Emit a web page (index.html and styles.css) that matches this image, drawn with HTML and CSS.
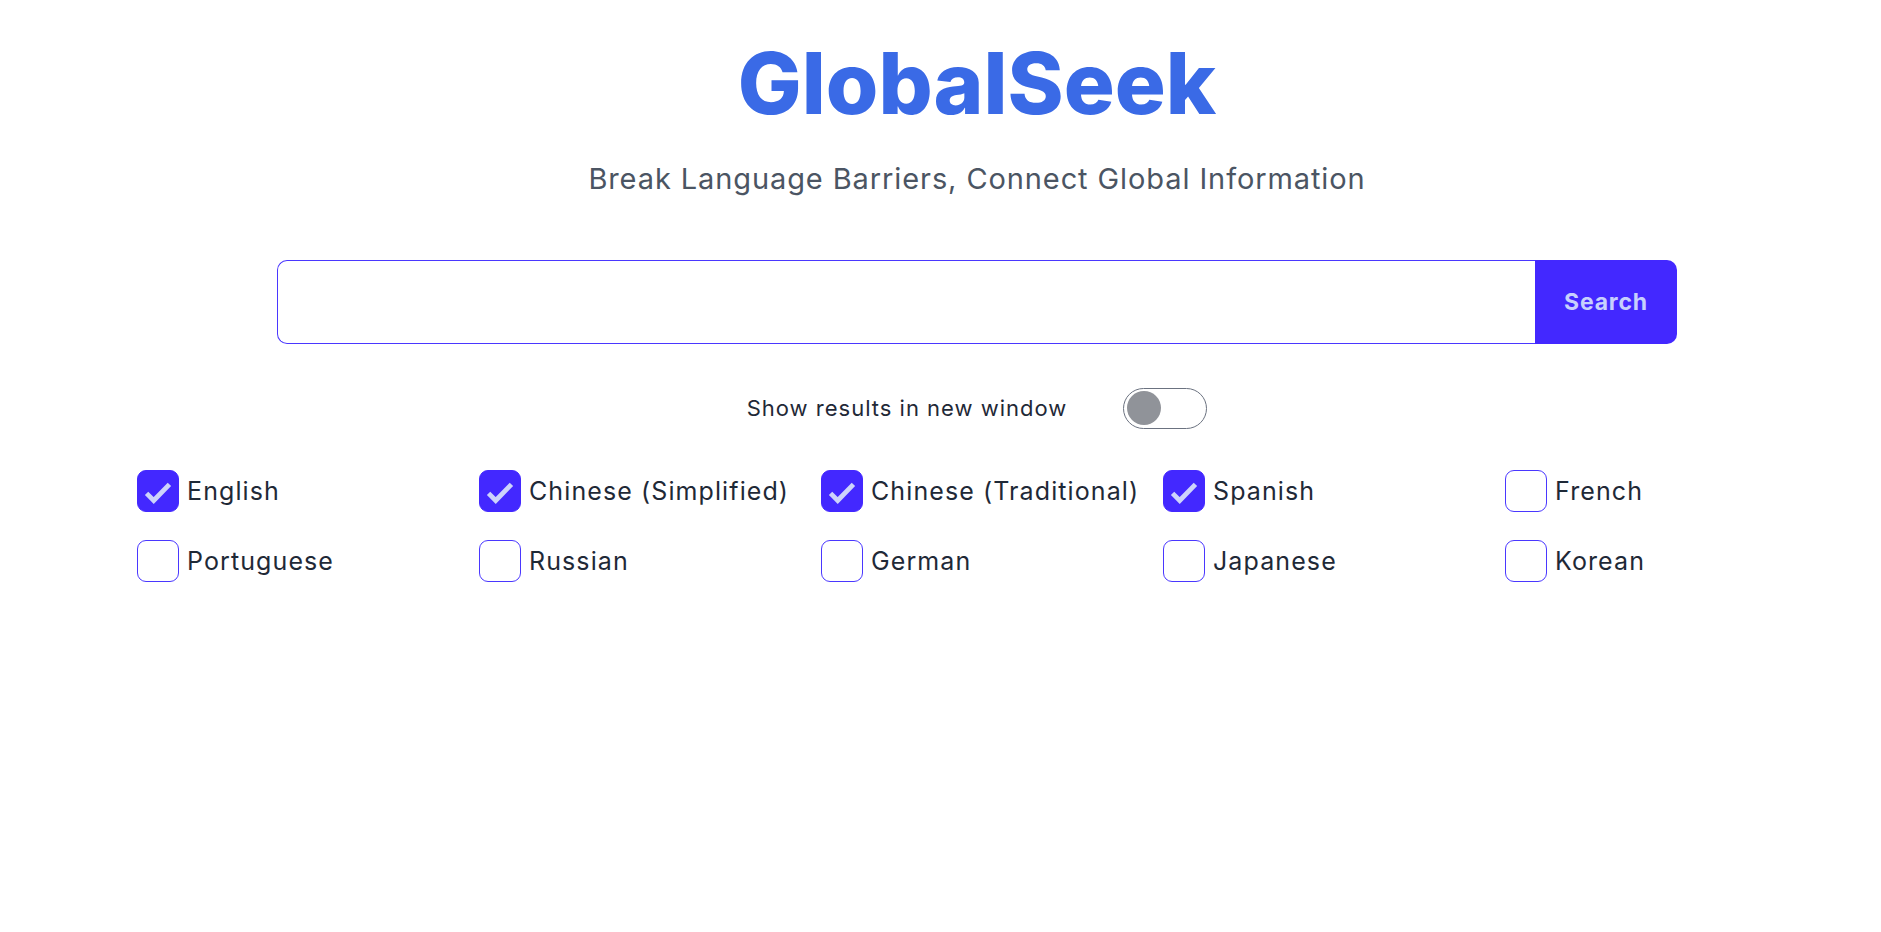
FILE: index.html
```html
<!DOCTYPE html>
<html lang="en">
<head>
    <meta charset="UTF-8">
    <meta name="viewport" content="width=device-width, initial-scale=1.0">
    <title>GlobalSeek</title>
    <link rel="stylesheet" href="styles.css">
</head>
<body>
    <div class="page">
        <!-- 标题 -->
        <header class="hero">
            <h1 class="brand">GlobalSeek</h1>
            <p class="tagline">Break Language Barriers, Connect Global Information</p>
        </header>

        <!-- 搜索框 -->
        <form class="search-bar" onsubmit="return false">
            <input class="search-input" type="text" aria-label="Search">
            <button class="search-btn" type="submit">Search</button>
        </form>

        <!-- 新窗口开关 -->
        <div class="toggle-row">
            <span class="toggle-label">Show results in new window</span>
            <label class="toggle">
                <input type="checkbox">
                <span class="toggle-knob"></span>
            </label>
        </div>

        <!-- 语言选择 -->
        <div class="lang-grid">
            <label class="lang"><span class="box checked"><svg viewBox="0 0 42 42"><polyline points="9,23.5 16.5,31 33,14"/></svg></span>English</label>
            <label class="lang"><span class="box checked"><svg viewBox="0 0 42 42"><polyline points="9,23.5 16.5,31 33,14"/></svg></span>Chinese (Simplified)</label>
            <label class="lang"><span class="box checked"><svg viewBox="0 0 42 42"><polyline points="9,23.5 16.5,31 33,14"/></svg></span>Chinese (Traditional)</label>
            <label class="lang"><span class="box checked"><svg viewBox="0 0 42 42"><polyline points="9,23.5 16.5,31 33,14"/></svg></span>Spanish</label>
            <label class="lang"><span class="box"></span>French</label>
            <label class="lang"><span class="box"></span>Portuguese</label>
            <label class="lang"><span class="box"></span>Russian</label>
            <label class="lang"><span class="box"></span>German</label>
            <label class="lang"><span class="box"></span>Japanese</label>
            <label class="lang"><span class="box"></span>Korean</label>
        </div>
    </div>
</body>
</html>
```

FILE: styles.css
```css
* {
    margin: 0;
    padding: 0;
    box-sizing: border-box;
}

body, html {
    width: 100%;
    height: 100%;
    overflow: hidden;
    background: #ffffff;
    font-family: Inter, 'Noto Sans', 'Liberation Sans', sans-serif;
    color: #1f2937;
}

.page {
    padding-left: 73px;
    display: flex;
    flex-direction: column;
    align-items: center;
}

.hero {
    text-align: center;
    padding-top: 33px;
}

.brand {
    font-size: 85px;
    line-height: 1.2;
    font-weight: 800;
    letter-spacing: 0;
    color: #3a6ae6;
}

.tagline {
    margin-top: 27px;
    font-size: 29px;
    line-height: 1.2;
    font-weight: 400;
    letter-spacing: 0.9px;
    color: #4b5563;
}

.search-bar {
    margin-top: 63px;
    width: 1400px;
    height: 84px;
    display: flex;
}

.search-input {
    flex: 1;
    border: 1px solid #4a37ff;
    border-right: none;
    border-radius: 10px 0 0 10px;
    outline: none;
    padding: 0 20px;
    font-family: inherit;
    font-size: 22px;
}

.search-btn {
    width: 142px;
    border: none;
    border-radius: 0 10px 10px 0;
    background: #4328ff;
    color: #c7d0fd;
    font-family: inherit;
    font-size: 23px;
    font-weight: 700;
    letter-spacing: 0.8px;
    cursor: pointer;
}

.toggle-row {
    margin-top: 44px;
    display: flex;
    align-items: center;
    gap: 56px;
}

.toggle-label {
    font-size: 22px;
    letter-spacing: 1px;
    color: #1f2937;
}

.toggle {
    position: relative;
    width: 84px;
    height: 41px;
    border: 1px solid #6b7280;
    border-radius: 21px;
    display: flex;
    align-items: center;
    padding-left: 3px;
}

.toggle input {
    position: absolute;
    opacity: 0;
}

.toggle-knob {
    width: 34px;
    height: 34px;
    border-radius: 50%;
    background: #909399;
}

.lang-grid {
    margin-top: 41px;
    width: 100%;
    padding: 0 64px;
    display: grid;
    grid-template-columns: repeat(5, minmax(0, 1fr));
    column-gap: 30px;
    row-gap: 28px;
}

.lang {
    display: flex;
    align-items: center;
    gap: 8px;
    font-size: 25px;
    letter-spacing: 1.1px;
    color: #1f2937;
    white-space: nowrap;
}

.box {
    width: 42px;
    height: 42px;
    flex-shrink: 0;
    border: 1px solid #4a37ff;
    border-radius: 9px;
    background: #ffffff;
}

.box.checked {
    border-color: #4328ff;
    background: #4328ff;
}

.box svg {
    display: block;
    width: 100%;
    height: 100%;
}

.box polyline {
    fill: none;
    stroke: #cdd3fb;
    stroke-width: 5;
}
```
